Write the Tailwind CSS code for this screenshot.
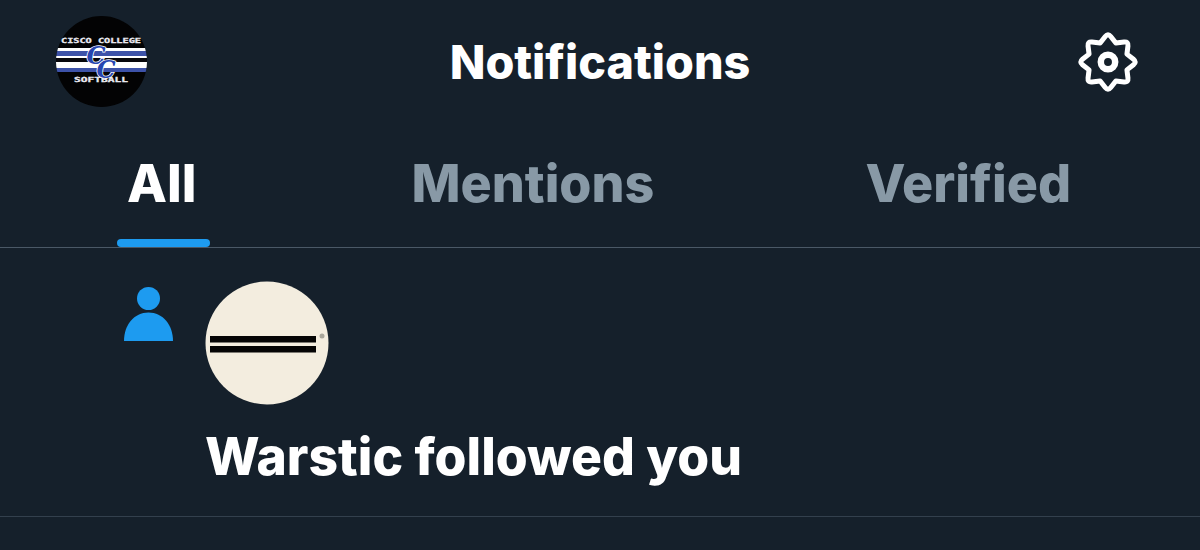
<!DOCTYPE html>
<html lang="en">
<head>
  <meta charset="UTF-8" />
  <title>Notifications</title>
  <script src="https://cdn.jsdelivr.net/npm/@tailwindcss/browser@4"></script>
</head>
<body class="bg-[#15202b] w-[1200px] h-[550px] overflow-hidden font-['Inter',sans-serif] text-white">
  <!-- top bar -->
  <header class="h-[124px] grid grid-cols-3 items-center pl-[56px] pr-[62px]">
    <svg class="w-[91px] h-[91px] -mt-[1px]" viewBox="0 0 91 91">
      <defs><clipPath id="logoClip"><circle cx="45.5" cy="45.5" r="45.5"/></clipPath></defs>
      <circle cx="45.5" cy="45.5" r="45.5" fill="#030304"/>
      <g clip-path="url(#logoClip)">
        <rect x="0" y="32" width="91" height="3" fill="#fff"/>
        <rect x="0" y="35" width="91" height="5" fill="#3d52a8"/>
        <rect x="0" y="40" width="91" height="2" fill="#fff"/>
        <rect x="0" y="42" width="91" height="4" fill="#08080c"/>
        <rect x="0" y="46" width="91" height="6" fill="#fff"/>
        <rect x="0" y="52" width="91" height="4" fill="#3d52a8"/>
      </g>
      <text x="45" y="27" text-anchor="middle" fill="#e8e8f0" stroke="#e8e8f0" stroke-width="0.3" font-size="7" font-weight="700" font-family="DejaVu Sans Mono" textLength="80" lengthAdjust="spacingAndGlyphs">CISCO COLLEGE</text>
      <text x="45" y="66" text-anchor="middle" fill="#e8e8f0" stroke="#e8e8f0" stroke-width="0.3" font-size="7" font-weight="700" font-family="DejaVu Sans Mono" textLength="54" lengthAdjust="spacingAndGlyphs">SOFTBALL</text>
      <text x="40" y="48" text-anchor="middle" fill="#2746b0" stroke="#fff" stroke-width="1.5" paint-order="stroke" font-size="24" font-style="italic" font-weight="700" font-family="DejaVu Serif">C</text>
      <text x="50" y="62" text-anchor="middle" fill="#2746b0" stroke="#fff" stroke-width="1.5" paint-order="stroke" font-size="24" font-style="italic" font-weight="700" font-family="DejaVu Serif">C</text>
    </svg>
    <h1 class="ml-[6px] text-[46.7px] font-extrabold text-center whitespace-nowrap">Notifications</h1>
    <svg class="w-[60px] h-[60px] justify-self-end" viewBox="0 0 60 60" fill="none" stroke="#fff" stroke-width="5" stroke-linejoin="round">
      <path d="M27.25 4.5 Q30 1 32.75 4.5 L37.85 11.06 L46.07 10.05 Q50.5 9.5 49.95 13.93 L48.94 22.15 L55.5 27.25 Q59 30 55.5 32.75 L48.94 37.85 L49.95 46.07 Q50.5 50.5 46.07 49.95 L37.85 48.94 L32.75 55.5 Q30 59 27.25 55.5 L22.15 48.94 L13.93 49.95 Q9.5 50.5 10.05 46.07 L11.06 37.85 L4.5 32.75 Q1 30 4.5 27.25 L11.06 22.15 L10.05 13.93 Q9.5 9.5 13.93 10.05 L22.15 11.06 Z"/>
      <circle cx="30" cy="30" r="7.2" stroke-width="6.5"/>
    </svg>
  </header>

  <!-- tabs -->
  <nav class="h-[124px] border-b border-[#4a5866] relative">
    <div class="flex items-start h-full pt-[29px] text-[52px] font-extrabold leading-[62px]">
      <span class="ml-[127px]">All</span>
      <span class="ml-[215px] text-[#8899a6]">Mentions</span>
      <span class="ml-[211px] text-[#8899a6]">Verified</span>
    </div>
    <div class="absolute left-[117px] bottom-0 w-[93px] h-[8px] rounded-full bg-[#1d9bf0]"></div>
  </nav>

  <!-- notification row -->
  <section class="h-[269px] border-b border-[#33404d] flex pl-[124px] pt-[33px]">
    <svg class="w-[49px] h-[54px] mt-[6px]" viewBox="0 0 49 54" fill="#1d9bf0">
      <circle cx="24.5" cy="11.5" r="11.5"/>
      <path d="M0 54 C0 38 10 25.5 24.5 25.5 C39 25.5 49 38 49 54 Z"/>
    </svg>
    <div class="pl-[32px]">
      <svg class="w-[124px] h-[124px]" viewBox="0 0 124 124">
        <circle cx="62" cy="62" r="61.5" fill="#f3eddf"/>
        <rect x="5" y="55" width="106" height="6.5" fill="#050505"/>
        <rect x="5" y="65" width="106" height="6.5" fill="#050505"/>
        <circle cx="117" cy="55" r="2.5" fill="#a9a69b"/>
      </svg>
      <p class="mt-[20px] text-[51.6px] font-extrabold leading-[62px] whitespace-nowrap">Warstic followed you</p>
    </div>
  </section>
</body>
</html>
